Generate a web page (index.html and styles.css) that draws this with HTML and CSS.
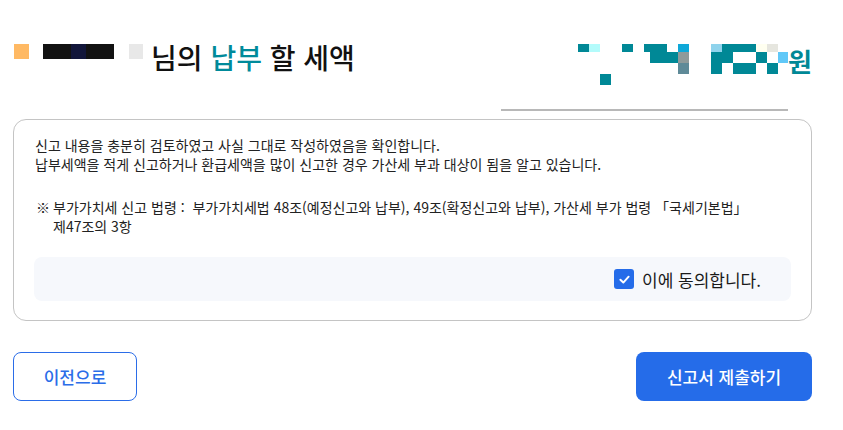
FILE: index.html
```html
<!DOCTYPE html>
<html lang="ko">
<head>
    <meta charset="utf-8">
    <title>신고서 제출</title>
    <link rel="stylesheet" href="styles.css">
</head>
<body>
    <div class="container">
        <div class="header">
            <div class="title-row">
                <span class="mask mask-orange"></span>
                <span class="mask mask-name">
                    <span class="mask-dark"></span><span class="mask-navy"></span><span class="mask-dark"></span>
                </span>
                <span class="mask mask-gray"></span>
                <h1>님의 <span class="accent">납부</span> 할 세액</h1>
            </div>
            <div class="amount">
                <div class="amount-row">
                    <svg class="amount-mask" width="210" height="41" viewBox="578 44 210 41">
                        <g fill="#008896">
                            <rect x="578" y="44" width="11" height="8"/>
                            <rect x="622" y="44" width="11" height="8"/>
                            <rect x="644" y="44" width="23" height="8"/>
                            <rect x="650" y="52" width="28" height="11"/>
                            <rect x="722" y="44" width="34" height="8"/>
                            <rect x="711" y="52" width="22" height="11"/>
                            <rect x="756" y="52" width="11" height="11"/>
                            <rect x="711" y="63" width="11" height="11"/>
                            <rect x="733" y="63" width="23" height="11"/>
                            <rect x="767" y="63" width="11" height="11"/>
                            <rect x="600" y="74" width="11" height="11"/>
                        </g>
                        <rect x="589" y="44" width="11" height="8" fill="#b3fbfb"/>
                        <rect x="678" y="44" width="11" height="8" fill="#0ea8d8"/>
                        <rect x="678" y="52" width="11" height="11" fill="#8f9a9a"/>
                        <rect x="678" y="63" width="11" height="11" fill="#5f8a98"/>
                        <rect x="711" y="44" width="11" height="8" fill="#8fd3ec"/>
                        <rect x="756" y="44" width="11" height="8" fill="#fffff0"/>
                        <rect x="767" y="44" width="11" height="8" fill="#e6e6df"/>
                        <rect x="778" y="52" width="10" height="11" fill="#60c8f8"/>
                    </svg>
                    <span class="won">원</span>
                </div>
                <div class="amount-line"></div>
            </div>
        </div>

        <div class="card">
            <p class="notice">신고 내용을 충분히 검토하였고 사실 그대로 작성하였음을 확인합니다.<br>납부세액을 적게 신고하거나 환급세액을 많이 신고한 경우 가산세 부과 대상이 됨을 알고 있습니다.</p>
            <p class="law"><span class="mark">※</span><span>부가가치세 신고 법령 :&nbsp; 부가가치세법 48조(예정신고와 납부), 49조(확정신고와 납부), 가산세 부가 법령 「국세기본법」<br>제47조의 3항</span></p>
            <div class="agree-box">
                <label class="agree">
                    <span class="checkbox">
                        <svg width="13" height="13" viewBox="0 0 12 12"><path d="M2.2 6.2 L4.9 8.8 L9.8 3.4" fill="none" stroke="#fff" stroke-width="1.8" stroke-linecap="round" stroke-linejoin="round"/></svg>
                    </span>
                    이에 동의합니다.
                </label>
            </div>
        </div>

        <div class="actions">
            <button class="btn btn-outline">이전으로</button>
            <button class="btn btn-primary">신고서 제출하기</button>
        </div>
    </div>
</body>
</html>
```

FILE: styles.css
```css
body {
    margin: 0;
    font-family: 'Noto Sans CJK KR', 'Noto Sans', sans-serif;
    color: #1a1a1a;
    background-color: #ffffff;
}

.container {
    width: 799px;
    margin-left: 13px;
}

.header {
    display: flex;
    justify-content: space-between;
    align-items: flex-start;
    height: 119px;
    padding-top: 44px;
    box-sizing: border-box;
}

.title-row {
    display: flex;
    align-items: flex-start;
}

.mask {
    display: block;
    height: 15px;
}

.mask-orange {
    width: 15px;
    margin-left: 1px;
    background-color: #ffb963;
}

.mask-name {
    display: flex;
    width: 71px;
    margin-left: 14px;
}

.mask-dark {
    flex: 1;
    background-color: #121212;
}

.mask-navy {
    width: 15px;
    background-color: #12163a;
}

.mask-gray {
    width: 14px;
    margin-left: 15px;
    background-color: #e8e8e8;
}

h1 {
    margin: -5px 0 0 8px;
    font-size: 28px;
    font-weight: 500;
    line-height: 36px;
    color: #111111;
}

.accent {
    color: #008a9a;
}

.amount {
    display: flex;
    flex-direction: column;
    align-items: flex-end;
}

.amount-row {
    display: flex;
    align-items: flex-start;
}

.amount-mask {
    display: block;
}

.won {
    margin-top: 1px;
    font-size: 26px;
    font-weight: 700;
    line-height: 32px;
    color: #008896;
}

.amount-line {
    width: 287px;
    height: 2px;
    margin-top: 24px;
    margin-right: 24px;
    background-color: #b8b8b8;
}

.card {
    border: 1px solid #c4c4c4;
    border-radius: 13px;
    padding: 16px 20px 19px;
}

.card p {
    margin: 0;
    font-size: 14px;
    color: #222222;
}

.notice {
    line-height: 19px;
    padding-left: 1px;
}

.law {
    display: flex;
    margin-top: 24px !important;
    line-height: 19px;
    padding-left: 2px;
}

.law .mark {
    flex: none;
    width: 17px;
}

.agree-box {
    display: flex;
    justify-content: flex-end;
    align-items: center;
    height: 44px;
    margin-top: 21px;
    padding-right: 30px;
    background-color: #f6f8fc;
    border-radius: 8px;
}

.agree {
    display: flex;
    align-items: center;
    gap: 8px;
    font-size: 17px;
    color: #1a1a1a;
}

.checkbox {
    display: flex;
    align-items: center;
    justify-content: center;
    width: 20px;
    height: 20px;
    border-radius: 3px;
    background-color: #256ce9;
}

.actions {
    display: flex;
    justify-content: space-between;
    margin-top: 31px;
}

.btn {
    height: 49px;
    border-radius: 8px;
    font-family: inherit;
    font-size: 17px;
    font-weight: 500;
    cursor: pointer;
}

.btn-outline {
    width: 124px;
    background-color: #ffffff;
    border: 1px solid #2b6de8;
    color: #2b6de8;
}

.btn-primary {
    width: 176px;
    background-color: #256ce9;
    border: none;
    color: #ffffff;
}
```
